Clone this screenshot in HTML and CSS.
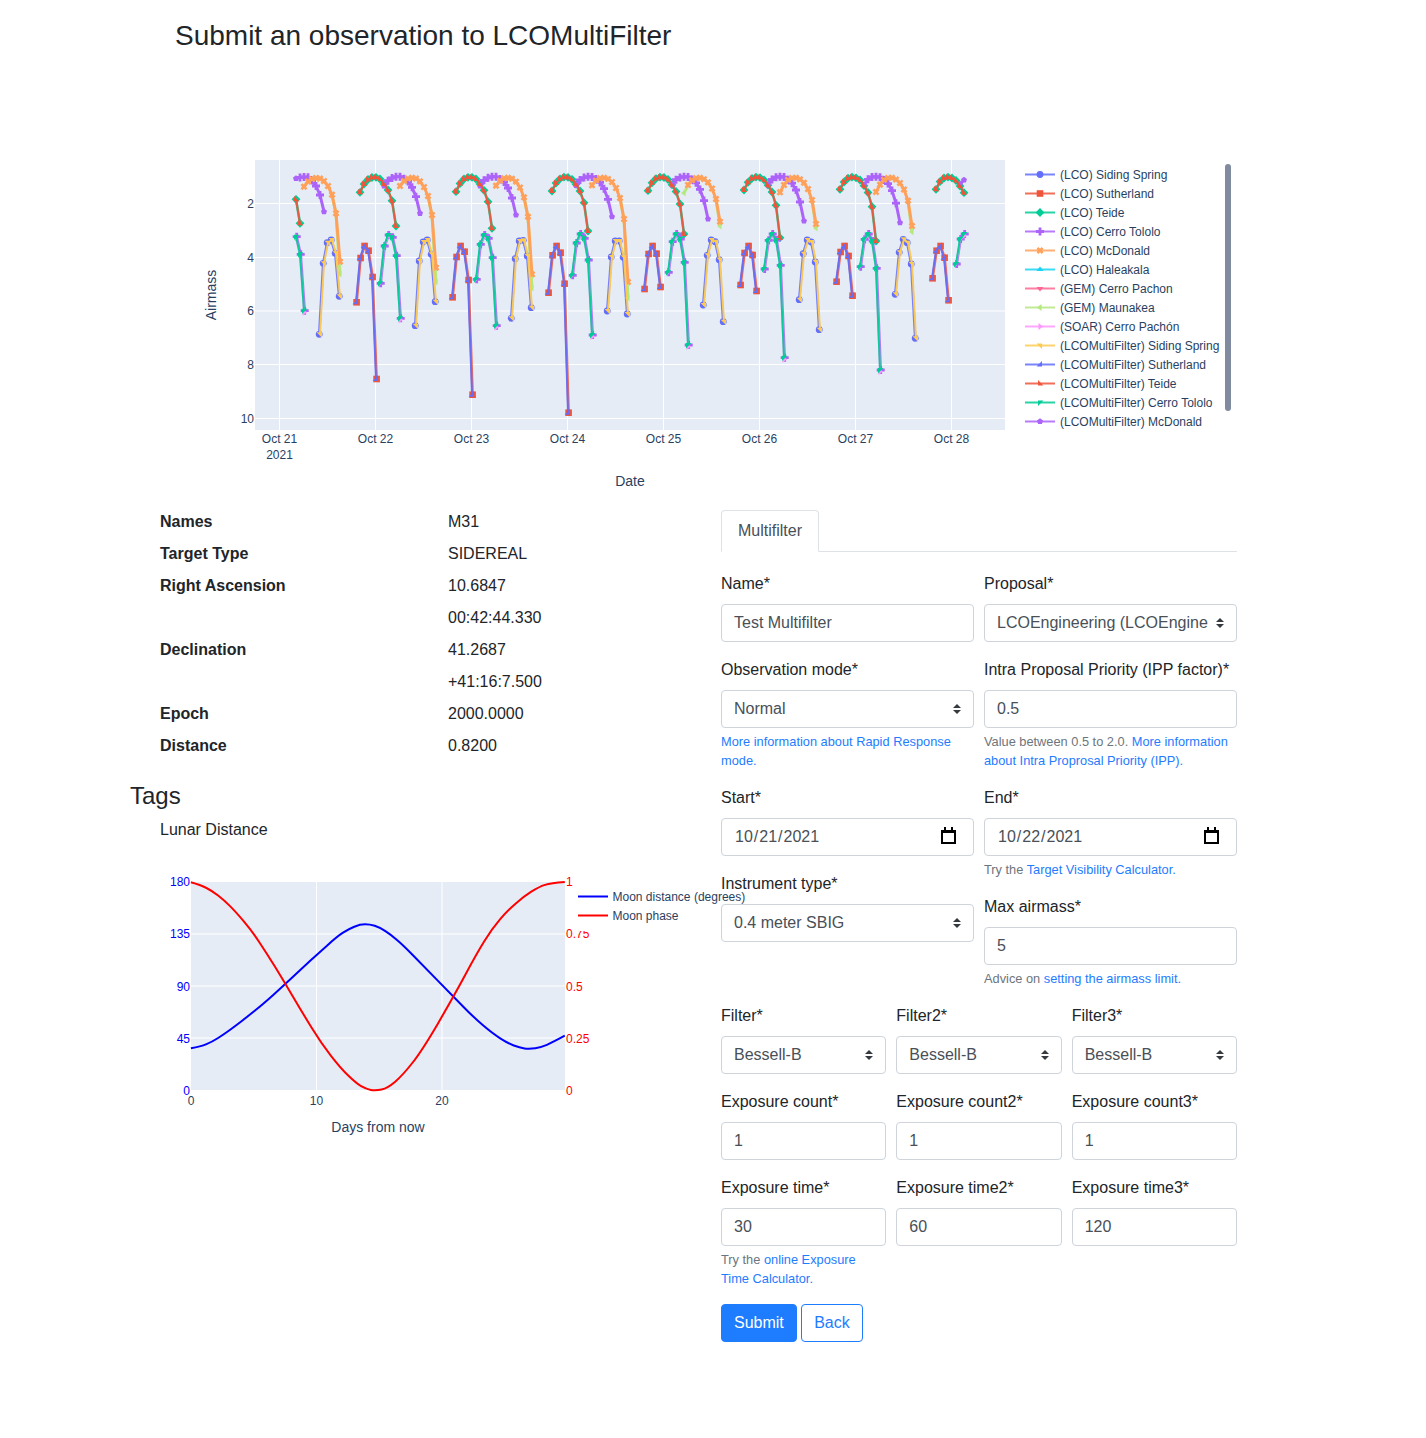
FILE: index.html
```html
<!DOCTYPE html>
<html lang="en">
<head>
    <meta charset="UTF-8">
    <meta name="viewport" content="width=device-width, initial-scale=1.0">
    <title>Submit an observation to LCOMultiFilter</title>
    <link rel="stylesheet" href="styles.css">
</head>
<body>
    <header class="top">
        <h3 class="page-title">Submit an observation to LCOMultiFilter</h3>

        <!-- airmass plot, drawn in page coordinates -->
        <svg class="plot airmass-plot" viewBox="175 60 1076 450" width="1076" height="450">
            <defs>
                <marker id="m-circle" viewBox="-6 -6 12 12" markerWidth="12" markerHeight="12" markerUnits="userSpaceOnUse"><circle r="3.4" class="mk-blue"/></marker>
                <marker id="m-square" viewBox="-6 -6 12 12" markerWidth="12" markerHeight="12" markerUnits="userSpaceOnUse"><rect x="-3.3" y="-3.3" width="6.6" height="6.6" class="mk-red"/></marker>
                <marker id="m-diamond" viewBox="-6 -6 12 12" markerWidth="12" markerHeight="12" markerUnits="userSpaceOnUse"><path d="M0-4.4 4.4 0 0 4.4-4.4 0Z" class="mk-green"/></marker>
                <marker id="m-cross" viewBox="-6 -6 12 12" markerWidth="12" markerHeight="12" markerUnits="userSpaceOnUse"><path d="M4 1.4H1.4V4H-1.4V1.4H-4V-1.4H-1.4V-4H1.4V-1.4H4Z" class="mk-purple"/></marker>
                <marker id="m-x" viewBox="-6 -6 12 12" markerWidth="12" markerHeight="12" markerUnits="userSpaceOnUse"><path d="M3.6 1.3H1.3V3.6H-1.3V1.3H-3.6V-1.3H-1.3V-3.6H1.3V-1.3H3.6Z" transform="rotate(45)" class="mk-orange"/></marker>
                <marker id="m-up" viewBox="-6 -6 12 12" markerWidth="12" markerHeight="12" markerUnits="userSpaceOnUse"><path d="M-3.5 1.5H3.5L0-3Z" class="mk-cyan"/></marker>
                <marker id="m-down" viewBox="-6 -6 12 12" markerWidth="12" markerHeight="12" markerUnits="userSpaceOnUse"><path d="M-3.5-1.5H3.5L0 3Z" class="mk-rose"/></marker>
                <marker id="m-left" viewBox="-6 -6 12 12" markerWidth="12" markerHeight="12" markerUnits="userSpaceOnUse"><path d="M1.5-3.5V3.5L-3 0Z" class="mk-lime"/></marker>
                <marker id="m-right" viewBox="-6 -6 12 12" markerWidth="12" markerHeight="12" markerUnits="userSpaceOnUse"><path d="M-1.5-3.5V3.5L3 0Z" class="mk-pink"/></marker>
                <marker id="m-ne" viewBox="-6 -6 12 12" markerWidth="12" markerHeight="12" markerUnits="userSpaceOnUse"><path d="M-3.4-2H2V3.4Z" class="mk-yellow"/></marker>
                <marker id="m-se" viewBox="-6 -6 12 12" markerWidth="12" markerHeight="12" markerUnits="userSpaceOnUse"><path d="M2-3.4V2H-3.4Z" class="mk-blue"/></marker>
                <marker id="m-sw" viewBox="-6 -6 12 12" markerWidth="12" markerHeight="12" markerUnits="userSpaceOnUse"><path d="M3.4 2H-2V-3.4Z" class="mk-red"/></marker>
                <marker id="m-nw" viewBox="-6 -6 12 12" markerWidth="12" markerHeight="12" markerUnits="userSpaceOnUse"><path d="M-2 3.4V-2H3.4Z" class="mk-green"/></marker>
                <marker id="m-pentagon" viewBox="-6 -6 12 12" markerWidth="12" markerHeight="12" markerUnits="userSpaceOnUse"><path d="M0-3.2 3 -1 1.9 2.6H-1.9L-3-1Z" class="mk-purple"/></marker>

                <g id="set-siding">
                    <polyline points="320,334.3 324,263.3 328,242.7 332,240 336,253.3 340,296.3"/>
                    <polyline points="416,325.7 420,261 424,242 428,240 432,254.3 436,301.7"/>
                    <polyline points="512,318.3 516,258.7 520,241 524,240.3 528,256 532,307.7"/>
                    <polyline points="608,311 612,257 616,241 620,241 624,257.3 628,314"/>
                    <polyline points="704,305 708,255.3 712,240 716,241.7 720,259.7 724,321.7"/>
                    <polyline points="800,299.7 804,253.7 808,240 812,242 816,262 820,329.7"/>
                    <polyline points="896,294.3 900,252.3 904,239.3 908,242.7 912,264 916,338.3"/>
                </g>
                <g id="set-sutherland">
                    <polyline points="356,302.3 360,258 364,246 368,250.7 372,277 376,379"/>
                    <polyline points="452,297.3 456,257 460,246 464,251.7 468,280 472,394.7"/>
                    <polyline points="548,292.7 552,255.3 556,246 560,252.7 564,283.7 568,412.7"/>
                    <polyline points="644,289 648,254 652,246 656,253.7 660,287"/>
                    <polyline points="740,285 744,253 748,246 752,255 756,291"/>
                    <polyline points="836,281.7 840,252 844,246 848,256 852,295.7"/>
                    <polyline points="932,278.3 936,250.7 940,246 944,257.7 948,300.3"/>
                </g>
                <g id="set-teide">
                    <polyline points="296,199.3 300,223.3"/>
                    <polyline points="360,192.3 364,184 368,179.5 372,177.5 376,177.3 380,179 384,184 388,190 392,200.7 396,226"/>
                    <polyline points="456,191.7 460,183.5 464,179 468,177.3 472,177.3 476,179 480,184 484,190.3 488,201.7 492,228.3"/>
                    <polyline points="552,191 556,183 560,178.8 564,177.2 568,177.4 572,179.3 576,184.3 580,191 584,202.7 588,231"/>
                    <polyline points="648,190.7 652,182.8 656,178.6 660,177.2 664,177.5 668,179.5 672,184.8 676,191.5 680,204 684,234"/>
                    <polyline points="744,190 748,182.3 752,178.4 756,177.2 760,177.6 764,179.8 768,185.2 772,192 776,205.3 780,237.7"/>
                    <polyline points="840,189.3 844,182 848,178.2 852,177.2 856,177.8 860,180 864,185.7 868,192.5 872,206.7 876,241"/>
                    <polyline points="936,189.3 940,181.6 944,178 948,177.2 952,178 956,180.5 960,186 964,192.7"/>
                </g>
                <g id="set-tololo">
                    <polyline points="296,236.7 300,254.3 304,310.7"/>
                    <polyline points="380,283.3 384,246 388,235 392,237.3 396,255.7 400,318.3"/>
                    <polyline points="476,279.3 480,244.3 484,235 488,238.3 492,257.7 496,325.7"/>
                    <polyline points="572,275.3 576,243 580,234 584,238.3 588,260 592,335"/>
                    <polyline points="668,272.3 672,241.7 676,234 680,239 684,262.3 688,345"/>
                    <polyline points="764,269 768,240.3 772,234 776,240 780,265.3 784,357.7"/>
                    <polyline points="860,266.7 864,239.3 868,234 872,241 876,268.3 880,370"/>
                    <polyline points="956,264 960,239 964,234"/>
                </g>
                <g id="set-arc">
                    <polyline points="296,178.5 300,177.4 304,176.9 308,177.3 312,180.5 316,186 320,195 324,211.7"/>
                    <polyline points="384,186 388,180.7 392,178 396,176.7 400,176.7 404,178.7 408,181.5 412,187.3 416,196.7 420,213.3"/>
                    <polyline points="480,186 484,180.3 488,177.8 492,176.7 496,176.8 500,178.9 504,182 508,188 512,198 516,215"/>
                    <polyline points="576,185.5 580,180 584,177.6 588,176.7 592,176.9 596,179.1 600,182.4 604,188.7 608,199.3 612,216.7"/>
                    <polyline points="672,185 676,179.7 680,177.4 684,176.7 688,177 692,179.4 696,182.8 700,189.4 704,200.6 708,219"/>
                    <polyline points="768,185 772,179.5 776,177.2 780,176.7 784,177.1 788,179.7 792,183.2 796,190 800,202 804,221"/>
                    <polyline points="864,185 868,179.3 872,177 876,176.7 880,177.2 884,180 888,183.6 892,190.6 896,203.2 900,222.7"/>
                    <polyline points="960,184 964,180"/>
                </g>
                <g id="set-mcdonald">
                    <polyline points="304,186.7 308,181.5 312,179 316,178 320,178.5 324,181 328,186 332,194.7 336,213.3 340,261.7"/>
                    <polyline points="400,186 404,181 408,178.6 412,177.8 416,178.5 420,181.3 424,187 428,196 432,215 436,267.7"/>
                    <polyline points="496,185.7 500,180.8 504,178.4 508,177.8 512,178.7 516,181.6 520,187.5 524,197.3 528,216.7 532,274.3"/>
                    <polyline points="592,185.3 596,180.6 600,178.3 604,177.8 608,178.9 612,182 616,188 620,198 624,219 628,282"/>
                    <polyline points="688,185 692,180.3 696,178.2 700,177.8 704,179.1 708,182.3 712,188.5 716,199 720,221.7"/>
                    <polyline points="780,192.3 784,185 788,180 792,178 796,177.8 800,179.3 804,182.7 808,189 812,200 816,224"/>
                    <polyline points="876,192 880,184.7 884,179.8 888,178 892,177.8 896,179.5 900,183 904,189.5 908,200.7 912,226"/>
                </g>
                <g id="set-maunakea">
                    <polyline points="332,195 336,214 340,274"/>
                    <polyline points="428,196 432,216 436,282"/>
                    <polyline points="524,197.3 528,217.5 532,288"/>
                    <polyline points="620,198 624,220 628,298"/>
                    <polyline points="688,185.5 684,193"/>
                    <polyline points="716,199 720,226"/>
                    <polyline points="812,200 816,228"/>
                    <polyline points="908,201 912,231.7"/>
                </g>
            </defs>

            <rect class="plot-bg" x="255" y="160" width="750" height="270"/>
            <path class="grid" d="M279.5 160V430M375.5 160V430M471.5 160V430M567.5 160V430M663.5 160V430M759.5 160V430M855.5 160V430M951.5 160V430M255 203.5H1005M255 257.5H1005M255 311H1005M255 364.5H1005M255 418.5H1005"/>

            <use href="#set-siding" class="ln under ln-blue" transform="translate(-0.8,0)" marker-start="url(#m-circle)" marker-mid="url(#m-circle)" marker-end="url(#m-circle)"/>
            <use href="#set-sutherland" class="ln under ln-red" transform="translate(0.6,0)" marker-start="url(#m-square)" marker-mid="url(#m-square)" marker-end="url(#m-square)"/>
            <use href="#set-teide" class="ln under ln-green" marker-start="url(#m-diamond)" marker-mid="url(#m-diamond)" marker-end="url(#m-diamond)"/>
            <use href="#set-tololo" class="ln under ln-purple" transform="translate(0.7,0)" marker-start="url(#m-cross)" marker-mid="url(#m-cross)" marker-end="url(#m-cross)"/>
            <use href="#set-arc" class="ln arc ln-purple" marker-start="url(#m-pentagon)" marker-mid="url(#m-cross)" marker-end="url(#m-pentagon)"/>
            <use href="#set-maunakea" class="ln arc ln-lime" marker-end="url(#m-left)"/>
            <use href="#set-mcdonald" class="ln arc ln-orange" marker-start="url(#m-x)" marker-mid="url(#m-x)" marker-end="url(#m-x)"/>
            <use href="#set-tololo" class="ln ln-pink" transform="translate(0,1.5)" marker-end="url(#m-right)"/>
            <use href="#set-siding" class="ln over ln-yellow" marker-start="url(#m-ne)" marker-mid="url(#m-ne)" marker-end="url(#m-ne)"/>
            <use href="#set-sutherland" class="ln over ln-blue" marker-start="url(#m-se)" marker-mid="url(#m-se)" marker-end="url(#m-se)"/>
            <use href="#set-teide" class="ln over ln-red" marker-start="url(#m-sw)" marker-mid="url(#m-sw)" marker-end="url(#m-sw)"/>
            <use href="#set-tololo" class="ln over ln-green" marker-start="url(#m-nw)" marker-mid="url(#m-nw)" marker-end="url(#m-nw)"/>

            <g class="tick tick-end">
                <text x="254" y="207.5">2</text>
                <text x="254" y="261.5">4</text>
                <text x="254" y="315">6</text>
                <text x="254" y="368.5">8</text>
                <text x="254" y="422.5">10</text>
            </g>
            <g class="tick tick-mid">
                <text x="279.5" y="443">Oct 21</text>
                <text x="279.5" y="459">2021</text>
                <text x="375.5" y="443">Oct 22</text>
                <text x="471.5" y="443">Oct 23</text>
                <text x="567.5" y="443">Oct 24</text>
                <text x="663.5" y="443">Oct 25</text>
                <text x="759.5" y="443">Oct 26</text>
                <text x="855.5" y="443">Oct 27</text>
                <text x="951.5" y="443">Oct 28</text>
            </g>
            <text class="axis-title tick-mid" x="630" y="486">Date</text>
            <text class="axis-title tick-mid" transform="translate(216,295) rotate(-90)">Airmass</text>

            <g class="legend">
                <polyline class="ln ln-blue" points="1025,174.5 1040,174.5 1055,174.5" marker-mid="url(#m-circle)"/><text x="1060" y="178.5">(LCO) Siding Spring</text>
                <polyline class="ln ln-red" points="1025,193.5 1040,193.5 1055,193.5" marker-mid="url(#m-square)"/><text x="1060" y="197.5">(LCO) Sutherland</text>
                <polyline class="ln ln-green" points="1025,212.5 1040,212.5 1055,212.5" marker-mid="url(#m-diamond)"/><text x="1060" y="216.5">(LCO) Teide</text>
                <polyline class="ln ln-purple" points="1025,231.5 1040,231.5 1055,231.5" marker-mid="url(#m-cross)"/><text x="1060" y="235.5">(LCO) Cerro Tololo</text>
                <polyline class="ln ln-orange" points="1025,250.5 1040,250.5 1055,250.5" marker-mid="url(#m-x)"/><text x="1060" y="254.5">(LCO) McDonald</text>
                <polyline class="ln ln-cyan" points="1025,269.5 1040,269.5 1055,269.5" marker-mid="url(#m-up)"/><text x="1060" y="273.5">(LCO) Haleakala</text>
                <polyline class="ln ln-rose" points="1025,288.5 1040,288.5 1055,288.5" marker-mid="url(#m-down)"/><text x="1060" y="292.5">(GEM) Cerro Pachon</text>
                <polyline class="ln ln-lime" points="1025,307.5 1040,307.5 1055,307.5" marker-mid="url(#m-left)"/><text x="1060" y="311.5">(GEM) Maunakea</text>
                <polyline class="ln ln-pink" points="1025,326.5 1040,326.5 1055,326.5" marker-mid="url(#m-right)"/><text x="1060" y="330.5">(SOAR) Cerro Pachón</text>
                <polyline class="ln ln-yellow" points="1025,345.5 1040,345.5 1055,345.5" marker-mid="url(#m-ne)"/><text x="1060" y="349.5">(LCOMultiFilter) Siding Spring</text>
                <polyline class="ln ln-blue" points="1025,364.5 1040,364.5 1055,364.5" marker-mid="url(#m-se)"/><text x="1060" y="368.5">(LCOMultiFilter) Sutherland</text>
                <polyline class="ln ln-red" points="1025,383.5 1040,383.5 1055,383.5" marker-mid="url(#m-sw)"/><text x="1060" y="387.5">(LCOMultiFilter) Teide</text>
                <polyline class="ln ln-green" points="1025,402.5 1040,402.5 1055,402.5" marker-mid="url(#m-nw)"/><text x="1060" y="406.5">(LCOMultiFilter) Cerro Tololo</text>
                <polyline class="ln ln-purple" points="1025,421.5 1040,421.5 1055,421.5" marker-mid="url(#m-pentagon)"/><text x="1060" y="425.5">(LCOMultiFilter) McDonald</text>
            </g>
            <rect class="legend-scroll" x="1225" y="164" width="6" height="247" rx="3"/>
        </svg>
    </header>

    <main class="content">
        <section class="details">
            <dl class="target">
                <dt>Names</dt><dd>M31</dd>
                <dt>Target Type</dt><dd>SIDEREAL</dd>
                <dt>Right Ascension</dt><dd>10.6847</dd>
                <dt></dt><dd>00:42:44.330</dd>
                <dt>Declination</dt><dd>41.2687</dd>
                <dt></dt><dd>+41:16:7.500</dd>
                <dt>Epoch</dt><dd>2000.0000</dd>
                <dt>Distance</dt><dd>0.8200</dd>
            </dl>
            <h4 class="tags-title">Tags</h4>
            <p class="lunar-title">Lunar Distance</p>

            <svg class="plot moon-plot" viewBox="130 858 620 300" width="620" height="300">
                <rect class="plot-bg" x="191" y="882" width="374" height="208"/>
                <path class="grid" d="M316.5 882V1090M442 882V1090M191 934H565M191 986H565M191 1038H565"/>
                <path class="ln ln-moon-blue" d="M190.9 1048.3Q200.6 1046.7 206.5 1044.2Q212.3 1041.7 218.1 1038Q223.9 1034.3 229.8 1030Q235.6 1025.7 241.5 1021.2Q247.3 1016.7 255 1010.5Q262.8 1004.3 273.5 994.7Q284.2 985 294.9 975Q305.6 965 311 960Q316.5 955 326.7 945.9Q336.8 936.7 342.6 932.9Q348.4 929 354.3 926.7Q360.1 924.3 365 924.3Q369.8 924.3 374.7 925.8Q379.6 927.3 385.4 931.2Q391.2 935 397 940Q402.9 945 412.7 955Q422.4 965 438 980.9Q453.5 996.7 463.3 1006.7Q473 1016.7 482.7 1025Q492.4 1033.3 500.2 1038.3Q508 1043.3 513.8 1045.5Q519.6 1047.7 524.5 1048.4Q529.4 1049 535.2 1048.2Q541 1047.3 546.9 1044.8Q552.7 1042.3 564.8 1035.7"/>
                <path class="ln ln-moon-red" d="M190.9 882.3Q200.6 885 206.5 888Q212.3 891 218.1 895.5Q223.9 900 229.8 905.9Q235.6 911.7 243.4 920.9Q251.2 930 259 941.7Q266.7 953.3 275.5 967.5Q284.2 981.7 293 996.7Q301.8 1011.7 311.5 1027.5Q321.2 1043.3 331 1055.8Q340.7 1068.3 348.5 1075.8Q356.2 1083.3 361.1 1086.2Q366 1089 370.9 1089.9Q375.7 1090.7 381.6 1089.5Q387.4 1088.3 395.2 1081.7Q402.9 1075 412.7 1062.5Q422.4 1050 438 1023.4Q453.5 996.7 465.2 975Q476.8 953.3 484.6 940.8Q492.4 928.3 500.2 919.2Q508 910 515.8 903.4Q523.5 896.7 531.3 891.7Q539.1 886.7 545 884.9Q550.8 883 564.8 882"/>

                <g class="tick tick-end tick-blue">
                    <text x="190" y="886">180</text>
                    <text x="190" y="938">135</text>
                    <text x="190" y="991">90</text>
                    <text x="190" y="1043">45</text>
                    <text x="190" y="1095">0</text>
                </g>
                <g class="tick tick-red">
                    <text x="566" y="886">1</text>
                    <text x="566" y="938">0.75</text>
                    <text x="566" y="991">0.5</text>
                    <text x="566" y="1043">0.25</text>
                    <text x="566" y="1095">0</text>
                </g>
                <g class="tick tick-mid">
                    <text x="191" y="1105">0</text>
                    <text x="316.5" y="1105">10</text>
                    <text x="442" y="1105">20</text>
                </g>
                <text class="axis-title tick-mid" x="378" y="1132">Days from now</text>

                <rect class="legend-bg" x="576" y="858" width="174" height="73"/>
                <g class="legend">
                    <line class="ln ln-moon-blue" x1="578" y1="896.5" x2="608" y2="896.5"/><text x="612.5" y="901">Moon distance (degrees)</text>
                    <line class="ln ln-moon-red" x1="578" y1="915.5" x2="608" y2="915.5"/><text x="612.5" y="920">Moon phase</text>
                </g>
            </svg>
        </section>

        <section class="observation">
            <ul class="tabs">
                <li class="tab">Multifilter</li>
            </ul>

            <form class="obs-form">
                <div class="two-cols">
                    <div class="col">
                        <div class="field">
                            <label for="name">Name*</label>
                            <input class="control" id="name" type="text" value="Test Multifilter">
                        </div>
                        <div class="field">
                            <label for="mode">Observation mode*</label>
                            <select class="control select" id="mode"><option>Normal</option></select>
                            <small class="help"><a href="#">More information about Rapid Response mode.</a></small>
                        </div>
                        <div class="field">
                            <label for="start">Start*</label>
                            <input class="control date" id="start" type="date" value="2021-10-21">
                        </div>
                        <div class="field">
                            <label for="instrument">Instrument type*</label>
                            <select class="control select" id="instrument"><option>0.4 meter SBIG</option></select>
                        </div>
                    </div>
                    <div class="col">
                        <div class="field">
                            <label for="proposal">Proposal*</label>
                            <select class="control select" id="proposal"><option>LCOEngineering (LCOEngineering)</option></select>
                        </div>
                        <div class="field">
                            <label for="ipp">Intra Proposal Priority (IPP factor)*</label>
                            <input class="control" id="ipp" type="text" value="0.5">
                            <small class="help">Value between 0.5 to 2.0. <a href="#">More information about Intra Proprosal Priority (IPP).</a></small>
                        </div>
                        <div class="field">
                            <label for="end">End*</label>
                            <input class="control date" id="end" type="date" value="2021-10-22">
                            <small class="help">Try the <a href="#">Target Visibility Calculator.</a></small>
                        </div>
                        <div class="field">
                            <label for="airmass">Max airmass*</label>
                            <input class="control" id="airmass" type="text" value="5">
                            <small class="help">Advice on <a href="#">setting the airmass limit.</a></small>
                        </div>
                    </div>
                </div>

                <div class="three-cols">
                    <div class="col">
                        <div class="field">
                            <label for="filter1">Filter*</label>
                            <select class="control select" id="filter1"><option>Bessell-B</option></select>
                        </div>
                        <div class="field">
                            <label for="count1">Exposure count*</label>
                            <input class="control" id="count1" type="text" value="1">
                        </div>
                        <div class="field">
                            <label for="time1">Exposure time*</label>
                            <input class="control" id="time1" type="text" value="30">
                            <small class="help">Try the <a href="#">online Exposure Time Calculator.</a></small>
                        </div>
                    </div>
                    <div class="col">
                        <div class="field">
                            <label for="filter2">Filter2*</label>
                            <select class="control select" id="filter2"><option>Bessell-B</option></select>
                        </div>
                        <div class="field">
                            <label for="count2">Exposure count2*</label>
                            <input class="control" id="count2" type="text" value="1">
                        </div>
                        <div class="field">
                            <label for="time2">Exposure time2*</label>
                            <input class="control" id="time2" type="text" value="60">
                        </div>
                    </div>
                    <div class="col">
                        <div class="field">
                            <label for="filter3">Filter3*</label>
                            <select class="control select" id="filter3"><option>Bessell-B</option></select>
                        </div>
                        <div class="field">
                            <label for="count3">Exposure count3*</label>
                            <input class="control" id="count3" type="text" value="1">
                        </div>
                        <div class="field">
                            <label for="time3">Exposure time3*</label>
                            <input class="control" id="time3" type="text" value="120">
                        </div>
                    </div>
                </div>

                <div class="actions">
                    <button class="btn btn-primary" type="button">Submit</button>
                    <button class="btn btn-outline" type="button">Back</button>
                </div>
            </form>
        </section>
    </main>
</body>
</html>
```

FILE: styles.css
```css
* {
    box-sizing: border-box;
}
body {
    font-family: "Liberation Sans", Arial, sans-serif;
    font-size: 16px;
    line-height: 1.5;
    color: #212529;
    margin: 0;
}
a {
    color: #1e7cff;
    text-decoration: none;
}

/* top block */
.top {
    padding-left: 175px;
}
.page-title {
    font-size: 28px;
    font-weight: 500;
    line-height: 34px;
    margin: 19px 0 7px;
}
.plot {
    display: block;
}

/* plot parts */
.plot-bg {
    fill: #e5ecf6;
}
.grid {
    fill: none;
    stroke: #fff;
    stroke-width: 1;
}
.ln {
    fill: none;
    stroke-width: 2;
    stroke-linejoin: round;
    stroke-opacity: .85;
}
.under {
    stroke-width: 2.6;
}
.arc {
    stroke-width: 3;
    stroke-opacity: 1;
}
.over {
    stroke-opacity: .95;
}
.ln-blue { stroke: #636efa; }
.ln-red { stroke: #ef553b; }
.ln-green { stroke: #00cc96; }
.ln-purple { stroke: #ab63fa; }
.ln-orange { stroke: #ffa15a; }
.ln-cyan { stroke: #19d3f3; }
.ln-rose { stroke: #ff6692; }
.ln-lime { stroke: #b6e880; }
.ln-pink { stroke: #ff97ff; }
.ln-yellow { stroke: #fecb52; }
.ln-moon-blue { stroke: #0000ff; stroke-opacity: 1; }
.ln-moon-red { stroke: #ff0000; stroke-opacity: 1; }
.mk-blue { fill: #636efa; }
.mk-red { fill: #ef553b; }
.mk-green { fill: #00cc96; }
.mk-purple { fill: #ab63fa; }
.mk-orange { fill: #ffa15a; }
.mk-cyan { fill: #19d3f3; }
.mk-rose { fill: #ff6692; }
.mk-lime { fill: #b6e880; }
.mk-pink { fill: #ff97ff; }
.mk-yellow { fill: #fecb52; }

.tick,
.legend {
    font-size: 12px;
    fill: #2a3f5f;
}
.tick-end {
    text-anchor: end;
}
.tick-mid {
    text-anchor: middle;
}
.tick-blue {
    fill: #0000ff;
}
.tick-red {
    fill: #ff0000;
}
.axis-title {
    font-size: 14px;
    fill: #2a3f5f;
}
.legend-scroll {
    fill: #808ba0;
}
.legend-bg {
    fill: #fff;
}

/* two main columns */
.content {
    display: grid;
    grid-template-columns: 561px 516px;
    column-gap: 30px;
    padding-left: 130px;
}
.target {
    display: grid;
    grid-template-columns: 288px 1fr;
    margin: 0 0 15px;
    padding-left: 30px;
}
.target dt {
    font-weight: 700;
    margin-bottom: 8px;
}
.target dd {
    margin: 0 0 8px;
}
.tags-title {
    font-size: 24px;
    font-weight: 500;
    line-height: 29px;
    margin: 0 0 8px;
}
.lunar-title {
    margin: 0 0 16px 30px;
}

/* form */
.tabs {
    list-style: none;
    display: flex;
    margin: 0 0 20px;
    padding: 0;
    border-bottom: 1px solid #dee2e6;
}
.tab {
    color: #495057;
    padding: 8px 16px;
    border: 1px solid #dee2e6;
    border-bottom-color: #fff;
    border-radius: 4px 4px 0 0;
    margin-bottom: -1px;
}
.two-cols {
    display: grid;
    grid-template-columns: 1fr 1fr;
    column-gap: 10px;
}
.three-cols {
    display: grid;
    grid-template-columns: repeat(3, 1fr);
    column-gap: 10px;
}
.field {
    margin-bottom: 16px;
}
.field label {
    display: block;
    margin-bottom: 8px;
}
.control {
    display: block;
    width: 100%;
    height: 38px;
    padding: 6px 12px;
    font-family: inherit;
    font-size: 16px;
    line-height: 1.5;
    color: #495057;
    background-color: #fff;
    border: 1px solid #ced4da;
    border-radius: 4px;
}
.select {
    appearance: none;
    padding-right: 28px;
    background: #fff url("data:image/svg+xml,%3csvg xmlns='http://www.w3.org/2000/svg' width='4' height='5' viewBox='0 0 4 5'%3e%3cpath fill='%23343a40' d='M2 0L0 2h4zm0 5L0 3h4z'/%3e%3c/svg%3e") no-repeat right 12px center / 8px 10px;
}
.date::-webkit-calendar-picker-indicator {
    width: 20px;
    height: 20px;
    padding: 0;
    margin-right: 3px;
    background: url("data:image/svg+xml,%3csvg xmlns='http://www.w3.org/2000/svg' width='20' height='20' viewBox='0 0 20 20'%3e%3cpath fill-rule='evenodd' d='M6 0h2v3h5V0h2v3h3v14H3V3h3zM5 6v9h11V6z'/%3e%3c/svg%3e") no-repeat center / 20px 20px;
}
.help {
    display: block;
    margin-top: 4px;
    font-size: 12.8px;
    line-height: 19px;
    color: #6c757d;
}
.actions {
    display: flex;
    gap: 4.4px;
    margin-bottom: 96px;
}
.btn {
    height: 38px;
    padding: 6px 12px;
    font-family: inherit;
    font-size: 16px;
    line-height: 1.5;
    border: 1px solid #1e7cff;
    border-radius: 4px;
}
.btn-primary {
    color: #fff;
    background-color: #1e7cff;
}
.btn-outline {
    color: #1e7cff;
    background-color: #fff;
}
```
